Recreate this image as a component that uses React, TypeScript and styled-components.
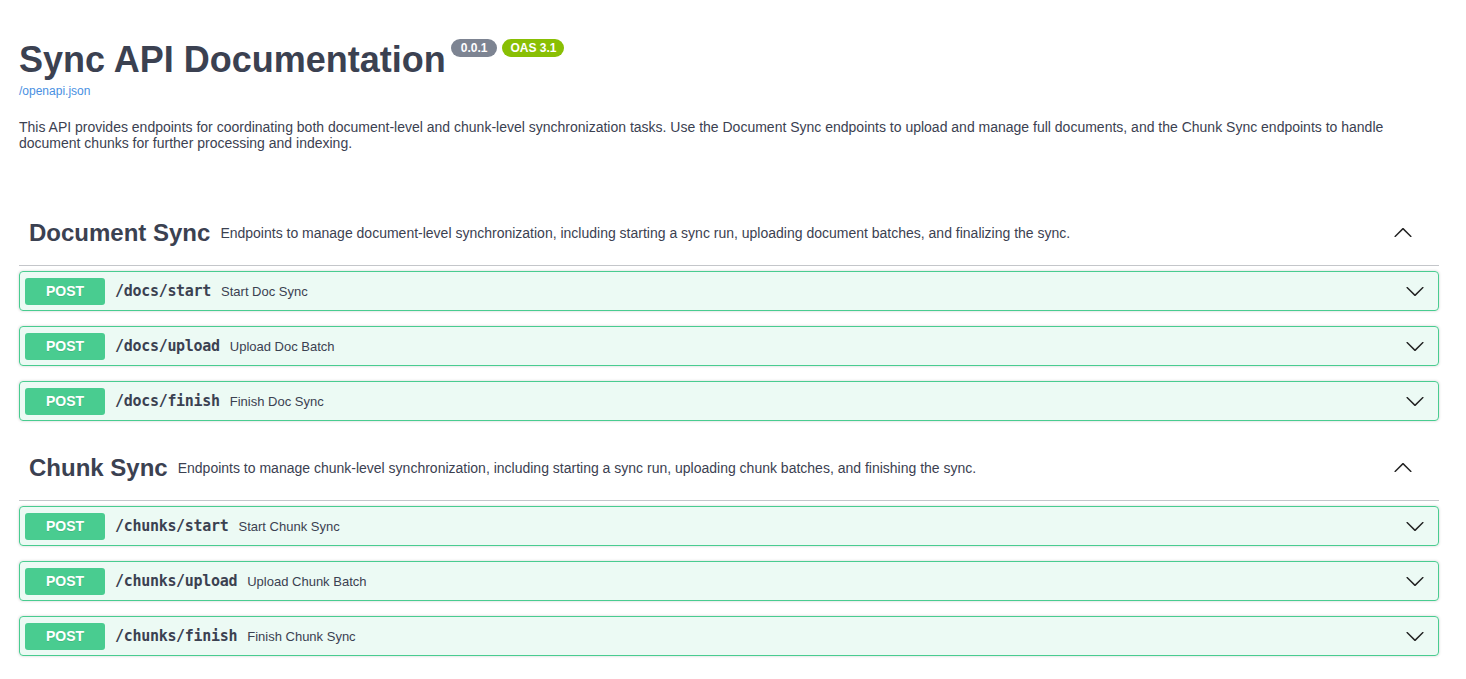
import * as React from 'react';
import styled, { createGlobalStyle } from 'styled-components';

const GlobalStyle = createGlobalStyle`
  html, body {
    margin: 0;
    padding: 0;
    background: #fff;
  }
  body {
    font-family: 'Liberation Sans', Arial, sans-serif;
    color: #3b4151;
  }
`;

interface IOperation {
  path: string;
  summary: string;
}

interface ITag {
  name: string;
  description: string;
  operations: IOperation[];
}

const tags: ITag[] = [
  {
    name: 'Document Sync',
    description:
      'Endpoints to manage document-level synchronization, including starting a sync run, uploading document batches, and finalizing the sync.',
    operations: [
      { path: '/docs/start', summary: 'Start Doc Sync' },
      { path: '/docs/upload', summary: 'Upload Doc Batch' },
      { path: '/docs/finish', summary: 'Finish Doc Sync' }
    ]
  },
  {
    name: 'Chunk Sync',
    description:
      'Endpoints to manage chunk-level synchronization, including starting a sync run, uploading chunk batches, and finishing the sync.',
    operations: [
      { path: '/chunks/start', summary: 'Start Chunk Sync' },
      { path: '/chunks/upload', summary: 'Upload Chunk Batch' },
      { path: '/chunks/finish', summary: 'Finish Chunk Sync' }
    ]
  }
];

const Wrapper = styled.div`
  padding: 39px 27px 20px 19px;
`;

const Info = styled.div`
  margin: 0 0 50px;
`;

const Title = styled.h2`
  display: flex;
  align-items: flex-start;
  margin: 0;
  font-size: 36px;
  font-weight: 700;
  color: #3b4151;
`;

const Badges = styled.div`
  display: flex;
  gap: 5px;
  margin-left: 5px;
`;

const Badge = styled.span<{ color: string; pad: number }>`
  display: inline-block;
  padding: 2px ${props => props.pad}px;
  border-radius: 57px;
  background: ${props => props.color};
  color: #fff;
  font-size: 12px;
  line-height: 14px;
  font-weight: 700;
`;

const SpecLink = styled.a`
  display: block;
  margin-top: 3px;
  font-size: 12px;
  line-height: 14px;
  color: #4990e2;
  text-decoration: none;
`;

const Description = styled.p`
  margin: 21px 0 0;
  font-size: 14px;
  line-height: 16px;
  color: #3b4151;
`;

const TagSection = styled.div`
  margin-bottom: 15px;
`;

const TagHeader = styled.h3`
  display: flex;
  align-items: center;
  box-sizing: border-box;
  height: 65px;
  margin: 0 0 5px;
  padding: 0 26px 0 10px;
  border-bottom: 1px solid rgba(59, 65, 81, 0.3);
  font-size: 24px;
  font-weight: 700;
  color: #3b4151;
`;

const TagDesc = styled.small`
  flex: 1;
  padding: 0 10px;
  font-size: 14px;
  font-weight: 400;
`;

const Arrow = styled.svg<{ up?: boolean }>`
  width: 20px;
  height: 20px;
  fill: #222;
  transform: ${props => (props.up ? 'rotate(180deg)' : 'none')};
`;

const Opblock = styled.div`
  display: flex;
  align-items: center;
  box-sizing: border-box;
  height: 40px;
  margin: 0 0 15px;
  padding: 0 13px 0 5px;
  border: 1px solid #49cc90;
  border-radius: 4px;
  background: rgba(73, 204, 144, 0.1);
  box-shadow: 0 0 3px rgba(0, 0, 0, 0.19);
`;

const Method = styled.span`
  min-width: 80px;
  padding: 6px 0;
  border-radius: 3px;
  background: #49cc90;
  color: #fff;
  font-size: 14px;
  line-height: 15px;
  font-weight: 700;
  text-align: center;
  text-shadow: 0 1px 0 rgba(0, 0, 0, 0.1);
`;

const Path = styled.span`
  padding: 0 10px;
  font-family: 'DejaVu Sans Mono', monospace;
  font-size: 15px;
  letter-spacing: -0.3px;
  font-weight: 700;
  color: #3b4151;
`;

const Summary = styled.span`
  flex: 1;
  font-size: 13px;
  color: #3b4151;
`;

const ArrowIcon: React.FC<{ up?: boolean }> = ({ up }) => (
  <Arrow up={up} viewBox='0 0 20 20'>
    <path d='M17.418 6.109c.272-.268.709-.268.979 0s.271.701 0 .969l-7.908 7.83c-.27.268-.707.268-.979 0l-7.908-7.83c-.27-.268-.27-.701 0-.969.271-.268.709-.268.979 0L10 13.25l7.418-7.141z' />
  </Arrow>
);

export default function App() {
  return (
    <>
      <GlobalStyle />
      <Wrapper>
        <Info>
          <Title>
            Sync API Documentation
            <Badges>
              <Badge color='#7d8492' pad={10}>0.0.1</Badge>
              <Badge color='#89bf04' pad={8}>OAS 3.1</Badge>
            </Badges>
          </Title>
          <SpecLink href='#'>/openapi.json</SpecLink>
          <Description>
            This API provides endpoints for coordinating both document-level and chunk-level
            synchronization tasks. Use the Document Sync endpoints to upload and manage full
            documents, and the Chunk Sync endpoints to handle document chunks for further
            processing and indexing.
          </Description>
        </Info>
        {tags.map(tag => (
          <TagSection key={tag.name}>
            <TagHeader>
              {tag.name}
              <TagDesc>{tag.description}</TagDesc>
              <ArrowIcon up />
            </TagHeader>
            {tag.operations.map(op => (
              <Opblock key={op.path}>
                <Method>POST</Method>
                <Path>{op.path}</Path>
                <Summary>{op.summary}</Summary>
                <ArrowIcon />
              </Opblock>
            ))}
          </TagSection>
        ))}
      </Wrapper>
    </>
  );
}
